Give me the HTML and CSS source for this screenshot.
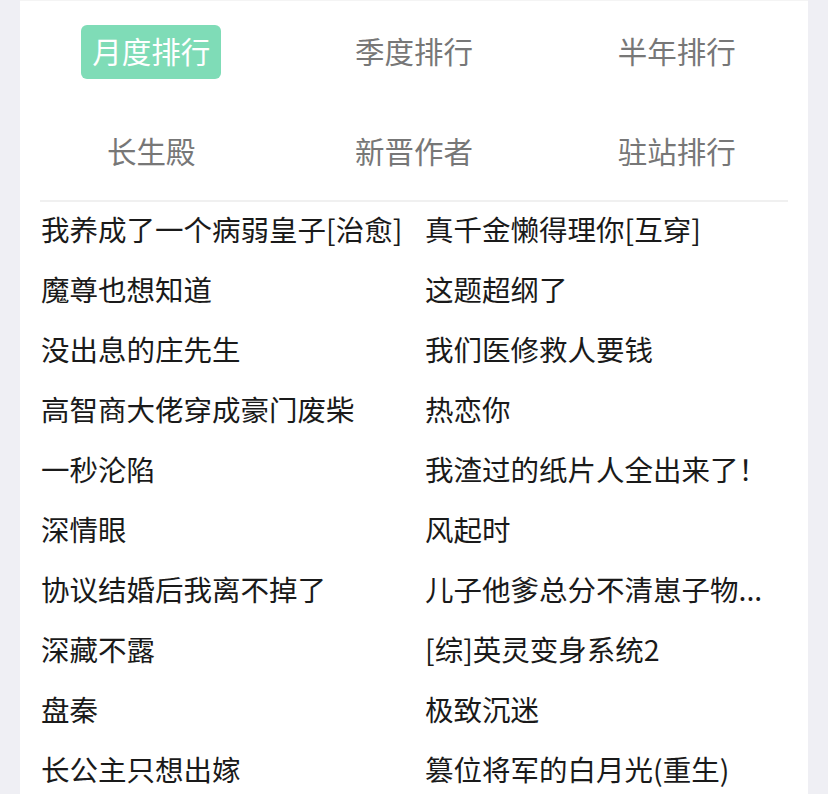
FILE: index.html
```html
<!DOCTYPE html>
<html lang="zh-CN">
<head>
  <meta charset="UTF-8" />
  <meta name="viewport" content="width=device-width, initial-scale=1.0"/>
  <title>排行榜</title>
  <link rel="stylesheet" href="styles.css">
</head>
<body>
  <div class="panel">
    <nav class="tabs">
      <div class="tab"><span class="active">月度排行</span></div>
      <div class="tab"><span>季度排行</span></div>
      <div class="tab"><span>半年排行</span></div>
      <div class="tab"><span>长生殿</span></div>
      <div class="tab"><span>新晋作者</span></div>
      <div class="tab"><span>驻站排行</span></div>
    </nav>
    <hr class="divider">
    <ul class="book-list">
      <li>我养成了一个病弱皇子[治愈]</li>
      <li>真千金懒得理你[互穿]</li>
      <li>魔尊也想知道</li>
      <li>这题超纲了</li>
      <li>没出息的庄先生</li>
      <li>我们医修救人要钱</li>
      <li>高智商大佬穿成豪门废柴</li>
      <li>热恋你</li>
      <li>一秒沦陷</li>
      <li>我渣过的纸片人全出来了！</li>
      <li>深情眼</li>
      <li>风起时</li>
      <li>协议结婚后我离不掉了</li>
      <li>儿子他爹总分不清崽子物...</li>
      <li>深藏不露</li>
      <li>[综]英灵变身系统2</li>
      <li>盘秦</li>
      <li>极致沉迷</li>
      <li>长公主只想出嫁</li>
      <li>篡位将军的白月光(重生)</li>
    </ul>
  </div>
</body>
</html>
```

FILE: styles.css
```css
* {
  box-sizing: border-box;
  padding: 0;
  margin: 0;
  font-family: "Noto Sans CJK SC", "Noto Sans", sans-serif;
}

body {
  background: #efeff4;
  padding: 0 20px;
  height: 794px;
  overflow: hidden;
}

.panel {
  background: #fff;
  height: 100%;
  border-top: 1px solid #f4f4f4;
}

.tabs {
  display: grid;
  grid-template-columns: repeat(3, 1fr);
  grid-auto-rows: 54px;
  row-gap: 46px;
  padding: 24px 0 21px;
}

.tab {
  display: flex;
  justify-content: center;
  align-items: center;
}

.tab span {
  display: flex;
  align-items: center;
  height: 54px;
  padding: 0 11px 4px;
  border-radius: 6px;
  font-size: 29.5px;
  color: #777;
}

.tab span.active {
  background: #7fdcb7;
  color: #fff;
}

.divider {
  border: none;
  border-top: 2px solid #f0f0f0;
  margin: 0 20px;
}

.book-list {
  list-style: none;
  display: grid;
  grid-template-columns: 384px 1fr;
  grid-auto-rows: 60px;
  padding: 0 20px;
}

.book-list li {
  font-size: 28.5px;
  color: #1a1a1a;
  white-space: nowrap;
  line-height: 54px;
  padding: 0 0 6px 1px;
}
```
